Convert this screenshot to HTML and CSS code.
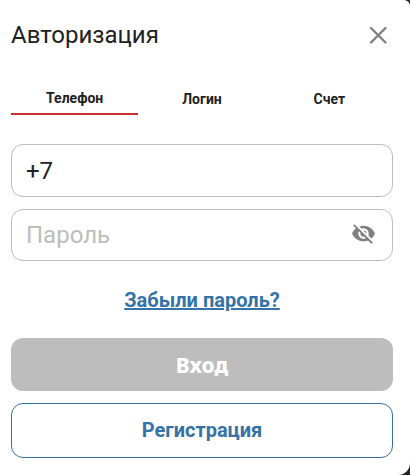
FILE: index.html
```html
<!DOCTYPE html>
<html lang="ru">
<head>
    <meta charset="UTF-8">
    <meta name="viewport" content="width=device-width, initial-scale=1.0">
    <title>Авторизация</title>
    <link rel="stylesheet" href="styles.css">
</head>
<body>
    <main class="modal">
        <header class="modal-header">
            <h1 class="title">Авторизация</h1>
            <button class="close" type="button" aria-label="Закрыть">
                <svg width="18" height="18" viewBox="0 0 18 18">
                    <path d="M2 2L16.5 16.5M16.5 2L2 16.5" fill="none" stroke="#808080" stroke-width="2.4" stroke-linecap="round"/>
                </svg>
            </button>
        </header>

        <div class="tabs" role="tablist">
            <button class="tab active" type="button" role="tab" aria-selected="true">Телефон</button>
            <button class="tab" type="button" role="tab" aria-selected="false">Логин</button>
            <button class="tab" type="button" role="tab" aria-selected="false">Счет</button>
        </div>

        <form class="form">
            <input class="field" type="tel" name="phone" value="+7" aria-label="Телефон">
            <div class="password">
                <input class="field" type="password" name="password" placeholder="Пароль" aria-label="Пароль">
                <button class="eye" type="button" aria-label="Показать пароль">
                    <svg width="25" height="25" viewBox="0 0 24 24">
                        <path fill="#808080" d="M11.83,9L15,12.16C15,12.11 15,12.05 15,12A3,3 0 0,0 12,9C11.94,9 11.89,9 11.83,9M7.53,9.8L9.08,11.35C9.03,11.56 9,11.77 9,12A3,3 0 0,0 12,15C12.22,15 12.44,14.97 12.65,14.92L14.2,16.47C13.53,16.8 12.79,17 12,17A5,5 0 0,1 7,12C7,11.21 7.2,10.47 7.53,9.8M2,4.27L4.28,6.55L4.73,7C3.08,8.3 1.78,10 1,12C2.73,16.39 7,19.5 12,19.5C13.55,19.5 15.03,19.2 16.38,18.66L16.81,19.08L19.73,22L21,20.73L3.27,3M12,7A5,5 0 0,1 17,12C17,12.64 16.87,13.26 16.64,13.82L19.57,16.75C21.07,15.5 22.27,13.86 23,12C21.27,7.61 17,4.5 12,4.5C10.6,4.5 9.26,4.75 8,5.2L10.17,7.35C10.74,7.13 11.35,7 12,7Z"/>
                    </svg>
                </button>
            </div>
            <a class="forgot" href="#">Забыли пароль?</a>
            <button class="btn login" type="submit" disabled>Вход</button>
            <button class="btn register" type="button">Регистрация</button>
        </form>
    </main>
</body>
</html>
```
FILE: styles.css
```css
*{
    box-sizing: border-box;
}
body{
    margin: 0;
    background-color: #222629;
    color: #212121;
    font-family: Roboto, "Liberation Sans", sans-serif;
}
button,
input{
    margin: 0;
    padding: 0;
    border: none;
    background: none;
    color: inherit;
    font-family: inherit;
}
.modal{
    padding: 16px 17px 17px 11px;
    border-radius: 0 6px 12px 0;
    background-color: #ffffff;
}

.modal-header{
    display: flex;
    align-items: center;
    justify-content: space-between;
    padding-right: 6px;
}
.title{
    margin: 0;
    font-size: 24px;
    font-weight: 400;
    line-height: 38px;
}
.close{
    display: flex;
    cursor: pointer;
}

.tabs{
    display: grid;
    grid-template-columns: repeat(3, 1fr);
    margin-top: 29px;
}
.tab{
    height: 32px;
    font-size: 14px;
    font-weight: 700;
    cursor: pointer;
}
.tab.active{
    border-bottom: 2px solid #c9302c;
}

.form{
    display: flex;
    flex-direction: column;
    gap: 12px;
    margin-top: 29px;
}
.field{
    width: 100%;
    height: 53px;
    padding: 0 14px;
    border: 1px solid #bdbdbd;
    border-radius: 12px;
    font-size: 24px;
    outline: none;
}
.field::placeholder{
    color: #bdbdbd;
    opacity: 1;
}
.password{
    position: relative;
}
.password .field{
    display: block;
    height: 52px;
    padding-right: 48px;
}
.eye{
    position: absolute;
    top: 12px;
    right: 17px;
    display: flex;
    cursor: pointer;
}
.forgot{
    align-self: center;
    margin: 13px 0 12px;
    color: #3572a5;
    font-size: 20px;
    font-weight: 700;
    line-height: 28px;
    text-decoration-thickness: 2px;
}
.btn{
    height: 53px;
    border-radius: 12px;
    font-size: 20px;
    font-weight: 700;
    cursor: pointer;
}
.login{
    background-color: #bdbdbd;
    color: #ffffff;
    font-family: "Noto Sans", sans-serif;
    font-size: 21px;
    font-weight: 800;
}
.register{
    height: 55px;
    padding-bottom: 2px;
    border: 1px solid #3572a5;
    color: #3572a5;
}
```
